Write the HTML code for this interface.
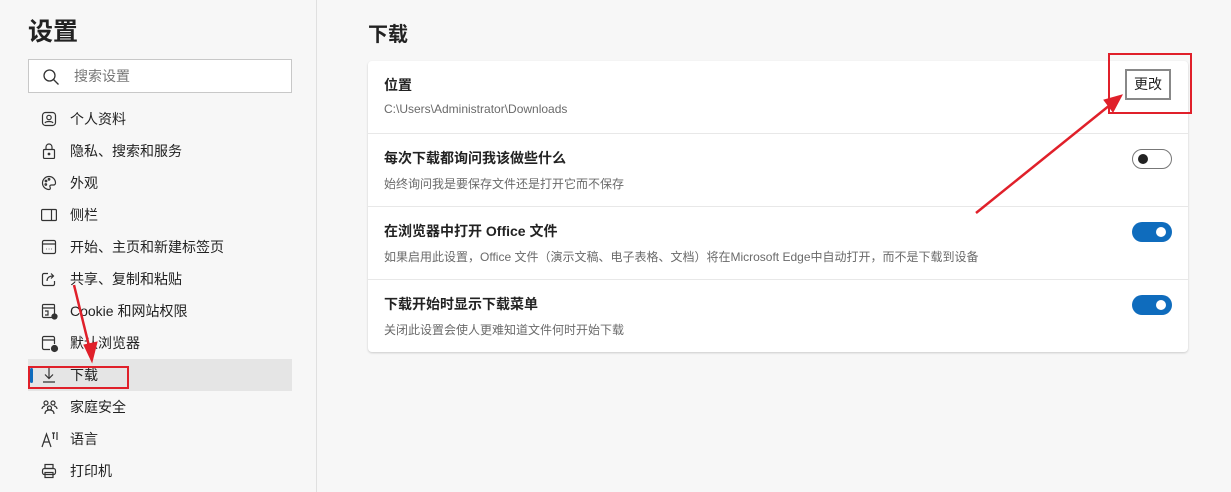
<!DOCTYPE html>
<html><head><meta charset="utf-8"><style>
*{margin:0;padding:0;box-sizing:border-box}
body{width:1231px;height:492px;overflow:hidden;background:#f7f7f7;font-family:"Liberation Sans","Noto Sans CJK SC",sans-serif;position:relative;color:#1a1a1a}
.abs{position:absolute}
.side{left:0;top:0;width:317px;height:492px;background:#f7f7f7;border-right:1px solid #e0e0e0}
h1{position:absolute;left:28px;top:12px;font-size:25px;font-weight:bold;color:#222}
.search{left:28px;top:59px;width:264px;height:34px;border:1px solid #c8c8c8;background:#fff}
.search span{position:absolute;left:45px;top:6px;font-size:14px;color:#777}
.nav{left:28px;width:264px;height:32px;font-size:14px;color:#222}
.nav span{position:absolute;left:42px;top:6px}
.nav svg{position:absolute;left:13px;top:8px}
.sel{background:#e5e5e5}
.sel:before{content:"";position:absolute;left:2px;top:9px;width:3px;height:15px;background:#0f6cbd;border-radius:2px}
h2{position:absolute;left:368px;top:18px;font-size:20px;font-weight:bold;color:#222}
.card{left:368px;top:61px;width:820px;height:291px;background:#fff;border-radius:4px;box-shadow:0 1px 2px rgba(0,0,0,.18)}
.row{position:absolute;left:0;width:820px;height:73px;border-top:1px solid #e8e8e8}
.row b{position:absolute;left:16px;top:14px;font-size:14px;color:#222}
.row i{position:absolute;left:16px;top:41px;font-size:12px;font-style:normal;color:#6a6a6a}
.tog{position:absolute;left:764px;top:15px;width:40px;height:20px;border-radius:10px}
.on{background:#0f6cbd}
.on:after{content:"";position:absolute;right:6px;top:5px;width:10px;height:10px;border-radius:50%;background:#fff}
.off{border:1px solid #777;background:#fff}
.off:after{content:"";position:absolute;left:5px;top:4px;width:10px;height:10px;border-radius:50%;background:#222}
.btn{left:1125px;top:69px;width:46px;height:31px;border:2px solid #888;background:#fff;font-size:14px;text-align:center;line-height:27px;color:#222}
.red{border:2px solid #e0202a}
</style></head><body>
<div class="abs side"></div>
<h1>设置</h1>
<div class="abs search"><svg class="abs" style="left:13px;top:8px" width="18" height="18" viewBox="0 0 18 18" fill="none" stroke="#333" stroke-width="1.3"><circle cx="7.5" cy="7.5" r="5.5"/><path d="M11.5 11.5l5 5"/></svg><span>搜索设置</span></div>

<div class="abs nav" style="top:103px"><svg width="16" height="16" viewBox="0 0 16 16" fill="none" stroke="#333" stroke-width="1.2"><rect x="1.5" y="1.5" width="13" height="13" rx="3"/><circle cx="8" cy="6.5" r="2.2"/><path d="M4 12c1-2 7-2 8 0"/></svg><span>个人资料</span></div>
<div class="abs nav" style="top:135px"><svg width="16" height="16" viewBox="0 0 16 16" fill="none" stroke="#333" stroke-width="1.2"><rect x="2.5" y="6.5" width="11" height="9" rx="1"/><path d="M5 6.5V4a3 3 0 016 0v2.5"/><circle cx="8" cy="11" r=".8" fill="#333"/></svg><span>隐私、搜索和服务</span></div>
<div class="abs nav" style="top:167px"><svg width="16" height="16" viewBox="0 0 16 16" fill="none" stroke="#333" stroke-width="1.2"><path d="M8 1.5a6.5 6.5 0 100 13c1.5 0 1.5-1.5 1-2.5s0-2 1.5-2h2a2 2 0 002-2A6.5 6.5 0 008 1.5z"/><circle cx="5" cy="6" r=".8"/><circle cx="8" cy="4.3" r=".8"/><circle cx="4.8" cy="9.5" r=".8"/></svg><span>外观</span></div>
<div class="abs nav" style="top:199px"><svg width="16" height="16" viewBox="0 0 16 16" fill="none" stroke="#333" stroke-width="1.2"><rect x=".6" y="2.5" width="14.8" height="11" rx="1"/><path d="M10.5 2.5v11"/></svg><span>侧栏</span></div>
<div class="abs nav" style="top:231px"><svg width="16" height="16" viewBox="0 0 16 16" fill="none" stroke="#333" stroke-width="1.2"><rect x="1.5" y="1.5" width="13" height="13" rx="1.5"/><path d="M1.5 5h13M5 10h.5M7.8 10h.5M10.5 10h.5"/></svg><span>开始、主页和新建标签页</span></div>
<div class="abs nav" style="top:263px"><svg width="16" height="16" viewBox="0 0 16 16" fill="none" stroke="#333" stroke-width="1.2"><path d="M7 2.5H3a1.5 1.5 0 00-1.5 1.5v9A1.5 1.5 0 003 14.5h9a1.5 1.5 0 001.5-1.5V10"/><path d="M6 10c0-3 2-5 6-5M10 2.5l2.5 2.5L10 7.5"/></svg><span>共享、复制和粘贴</span></div>
<div class="abs nav" style="top:295px"><svg width="18" height="18" viewBox="0 0 18 18" fill="none" stroke="#333" stroke-width="1.2"><rect x="1.5" y="1.5" width="12" height="13" rx="1"/><path d="M1.5 5h12M4 8h3v4H4"/><circle cx="13.5" cy="13.5" r="2.5" fill="#333"/></svg><span>Cookie 和网站权限</span></div>
<div class="abs nav" style="top:327px"><svg width="18" height="18" viewBox="0 0 18 18" fill="none" stroke="#333" stroke-width="1.2"><path d="M9 14.5H3a1.5 1.5 0 01-1.5-1.5V3A1.5 1.5 0 013 1.5h9A1.5 1.5 0 0113.5 3v6M1.5 5h12"/><circle cx="13.5" cy="13.5" r="3" fill="#333"/></svg><span>默认浏览器</span></div>
<div class="abs nav sel" style="top:359px"><svg width="16" height="16" viewBox="0 0 16 16" fill="none" stroke="#333" stroke-width="1.2"><path d="M8 1v10M4 7.5L8 11.5l4-4M2 15h12"/></svg><span>下载</span></div>
<div class="abs nav" style="top:391px"><svg width="18" height="18" viewBox="0 0 18 18" fill="none" stroke="#333" stroke-width="1.2"><circle cx="5" cy="4" r="2"/><circle cx="12" cy="4" r="2"/><circle cx="8.5" cy="9" r="2"/><path d="M1 10c0-2 2-3 3-3M16 10c0-2-2-3-3-3M4 15c0-3 2-4 4.5-4s4.5 1 4.5 4"/></svg><span>家庭安全</span></div>
<div class="abs nav" style="top:423px"><svg width="18" height="18" viewBox="0 0 18 18" fill="none" stroke="#333" stroke-width="1.2"><path d="M1 16L5.5 3 10 16M2.8 11h5.5M11 2h3M12.5 2v6M16 1v8"/></svg><span>语言</span></div>
<div class="abs nav" style="top:455px"><svg width="16" height="16" viewBox="0 0 16 16" fill="none" stroke="#333" stroke-width="1.2"><rect x="4" y="1.5" width="8" height="4"/><rect x="1.5" y="5.5" width="13" height="6" rx="2"/><rect x="4" y="9.5" width="8" height="5"/></svg><span>打印机</span></div>

<h2>下载</h2>
<div class="abs card">
<div class="row" style="top:0;border-top:none"><b>位置</b><i>C:\Users\Administrator\Downloads</i></div>
<div class="row" style="top:72px"><b>每次下载都询问我该做些什么</b><i>始终询问我是要保存文件还是打开它而不保存</i><div class="tog off"></div></div>
<div class="row" style="top:145px"><b>在浏览器中打开 Office 文件</b><i>如果启用此设置，Office 文件（演示文稿、电子表格、文档）将在Microsoft Edge中自动打开，而不是下载到设备</i><div class="tog on"></div></div>
<div class="row" style="top:218px"><b>下载开始时显示下载菜单</b><i>关闭此设置会使人更难知道文件何时开始下载</i><div class="tog on"></div></div>
</div>
<div class="abs btn">更改</div>
<div class="abs red" style="left:1108px;top:53px;width:84px;height:61px"></div>
<div class="abs red" style="left:28px;top:366px;width:101px;height:23px"></div>
<svg class="abs" style="left:0;top:0" width="1231" height="492"><g stroke="#e0202a" stroke-width="2.5" fill="#e0202a"><line x1="976" y1="213" x2="1110" y2="105"/><polygon points="1122,95 1104,100 1113,112" stroke-width="1"/><line x1="74" y1="285" x2="90" y2="350"/><polygon points="92,362 84,345 97,342" stroke-width="1"/></g></svg>
</body></html>
